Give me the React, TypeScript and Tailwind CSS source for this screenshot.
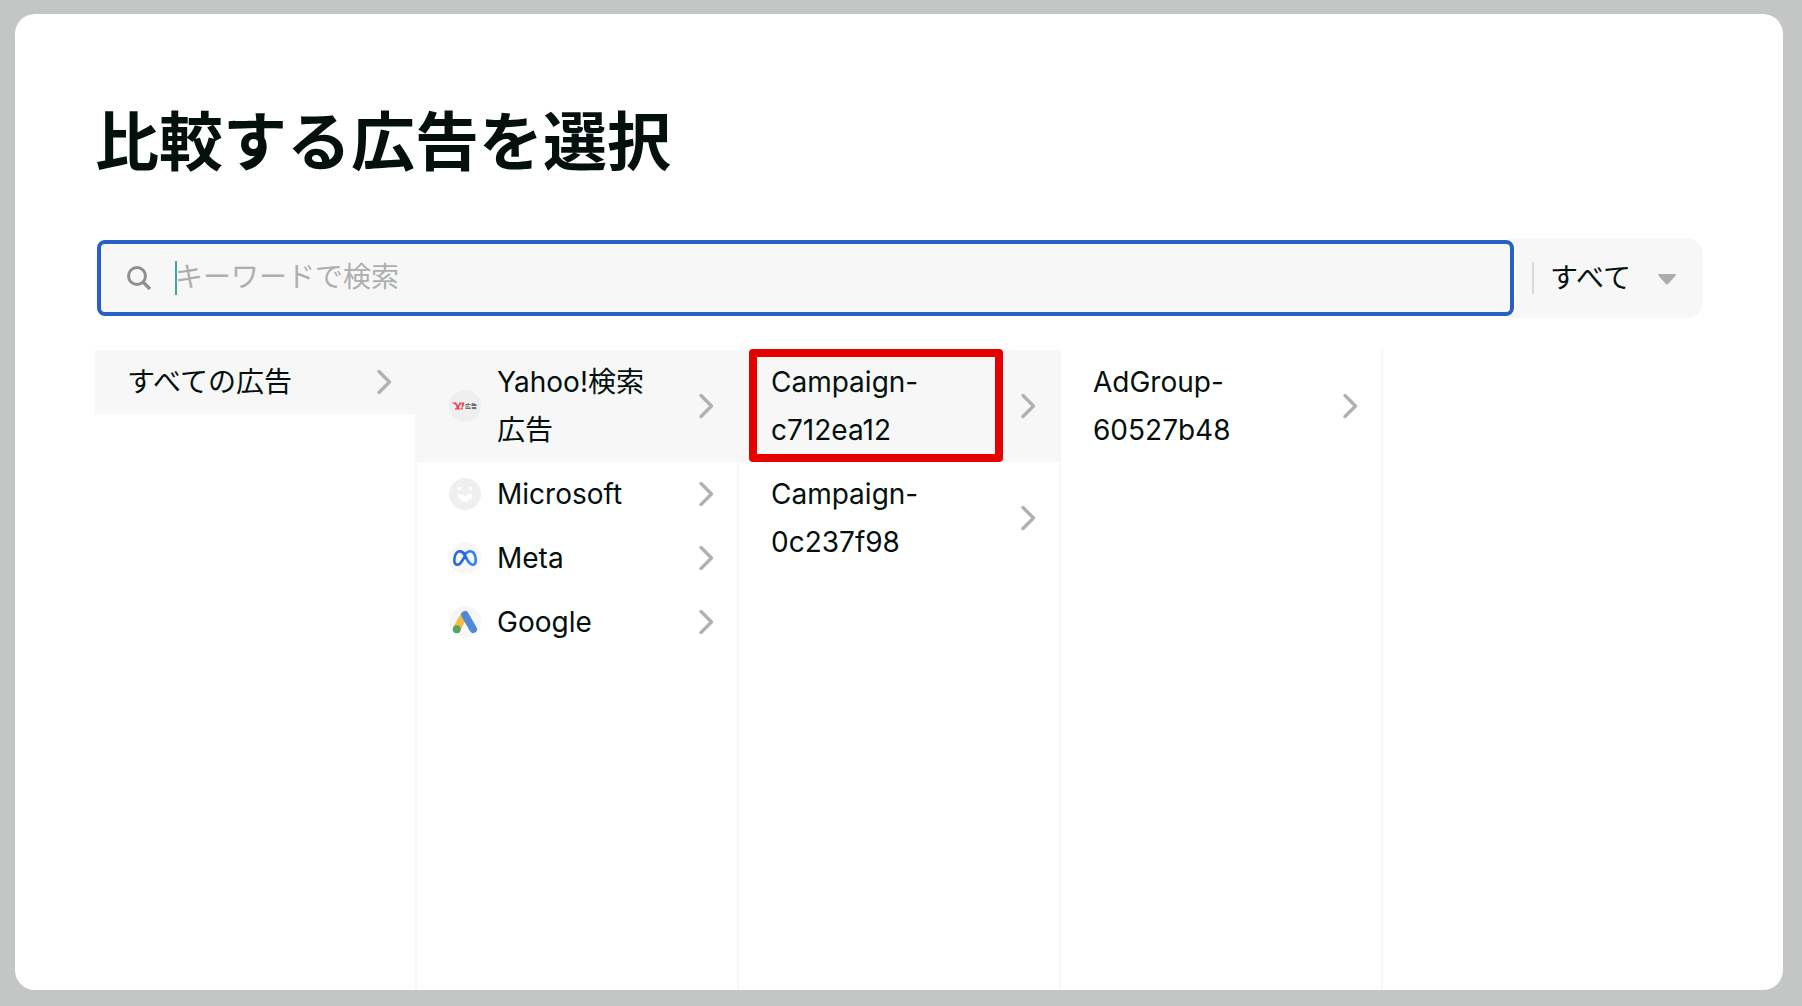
import React from "react";

type Item = {
  label: string;
  icon?: React.ReactNode;
  selected?: boolean;
  highlighted?: boolean;
};

function YahooIcon() {
  return (
    <span className="size-8 shrink-0 rounded-full bg-[#efefef] flex items-center justify-center whitespace-nowrap">
      <svg width="26" height="10" viewBox="0 0 26 10" aria-hidden="true">
        <path d="M0.3 1.6H4.6V2.5L5.8 4.2L7.6 2.5H7V1.6H9.8V2.5L7.1 5.1V7.2H8.4V8.4H3V7.2H4.4V5.1L1.8 2.5H0.3Z" fill="#f0424c" />
        <path d="M10.2 1.6H12.5L11.1 6H9.5ZM9.2 6.6H10.9L10.4 8.4H8.7Z" fill="#f0424c" />
        <text x="13" y="7" fontSize="6" fontWeight="700" fill="#5c5c5c" fontFamily="Noto Sans CJK JP">広告</text>
      </svg>
    </span>
  );
}

function MicrosoftIcon() {
  return (
    <span className="size-8 shrink-0 rounded-full bg-[#efefef]">
      <svg width="32" height="32" viewBox="0 0 32 32" fill="#fff" aria-hidden="true">
        <circle cx="10.5" cy="10.5" r="1.8" />
        <circle cx="21.5" cy="10.5" r="1.8" />
        <path d="M9 17.2Q9 16 10.4 16Q14 16 16.3 18.2Q18 16 21.5 16Q23.2 16 23.2 17.4Q23.2 19.6 20.9 22.2L17.6 18.9L17.1 19.4L20.1 22.8Q18.3 24 16 23.8Q9.6 23.3 9 17.2Z" />
      </svg>
    </span>
  );
}

function MetaIcon() {
  return (
    <span className="size-8 shrink-0 rounded-full bg-[#f7f7f7]">
      <svg width="32" height="32" viewBox="0 0 32 32" fill="none" strokeWidth="2.6" strokeLinecap="round" aria-hidden="true">
        <path d="M16 12.4C17.8 9.9 19.5 9.2 21.2 9.2C24.6 9.2 26.8 13.4 26.8 18C26.8 21 25.6 22.7 23.5 22.7C21 22.7 19.8 20.6 16.4 14.9" stroke="#2f80f2" />
        <path d="M16 12.4C14.2 9.9 12.5 9.2 10.8 9.2C7.5 9.2 5.3 13.6 5.3 18.2C5.3 21 6.5 22.7 8.5 22.7C11 22.7 12.3 20.6 15.6 14.9L16 14.1" stroke="#2b66df" />
        <path d="M11 9.2C13.2 9.2 14.8 11.5 17.2 15.7" stroke="#2b66df" />
      </svg>
    </span>
  );
}

function GoogleAdsIcon() {
  return (
    <span className="size-8 shrink-0 rounded-full bg-[#f7f7f7]">
      <svg width="32" height="32" viewBox="0 0 32 32" fill="none" strokeWidth="7.6" aria-hidden="true">
        <path d="M15.4 9L7.8 22.6" stroke="#f2bd42" />
        <path d="M16 8.8L24.2 23.2" stroke="#5189d6" strokeLinecap="round" />
        <circle cx="7.8" cy="23.2" r="4" fill="#58a65c" />
      </svg>
    </span>
  );
}

function ChevronIcon() {
  return (
    <svg className="shrink-0" width="32" height="32" viewBox="0 0 32 32" fill="none" stroke="#b0b2b1" strokeWidth="3.4" strokeLinecap="round" strokeLinejoin="round" aria-hidden="true">
      <path d="M12 5.5L22.5 16L12 26.5" />
    </svg>
  );
}

const columns: Item[][] = [
  [{ label: "すべての広告", selected: true }],
  [
    { label: "Yahoo!検索広告", icon: <YahooIcon />, selected: true },
    { label: "Microsoft", icon: <MicrosoftIcon /> },
    { label: "Meta", icon: <MetaIcon /> },
    { label: "Google", icon: <GoogleAdsIcon /> },
  ],
  [
    { label: "Campaign-c712ea12", selected: true, highlighted: true },
    { label: "Campaign-0c237f98" },
  ],
  [{ label: "AdGroup-60527b48" }],
  [],
];

function Row({ item }: { item: Item }) {
  return (
    <button
      type="button"
      className={`relative w-full flex items-center gap-4 py-2 pl-8 pr-4 text-left cursor-pointer ${
        item.selected ? "bg-[#f7f7f7]" : ""
      }`}
    >
      {item.icon}
      <span className="flex-1 min-w-0 pr-2">{item.label}</span>
      <ChevronIcon />
      {item.highlighted && (
        <span className="absolute -top-px bottom-0 left-[10px] right-14 border-8 border-[#e60000] rounded-sm" />
      )}
    </button>
  );
}

function SearchBar() {
  return (
    <div className="flex items-center h-20 rounded-2xl bg-[#f7f7f7]">
      <div className="flex-1 self-stretch rounded-[10px] bg-white p-[2px]">
        <label className="flex items-center h-full rounded-lg border-4 border-[#2860c8] bg-[#f7f7f7] pl-6">
          <svg className="shrink-0" width="28" height="28" viewBox="0 0 28 28" fill="none" stroke="#8c918f" aria-hidden="true">
            <circle cx="12" cy="12" r="8.5" strokeWidth="3" />
            <path d="M18 18L25 25" strokeWidth="3.4" />
          </svg>
          <span className="w-[2px] h-[34px] ml-[22px] -mr-[2px] bg-[#45a3a0] shrink-0" />
          <input
            type="text"
            aria-label="キーワードで検索"
            placeholder="キーワードで検索"
            className="flex-1 min-w-0 h-12 pb-[2px] bg-transparent outline-none caret-[#45a3a0] placeholder:text-[#acafae]"
          />
        </label>
      </div>
      <span className="w-[2px] h-8 ml-4 bg-[#d9dada]" />
      <div className="relative">
        <select
          aria-label="検索対象"
          className="appearance-none w-[169px] h-12 pl-4 pb-[2px] bg-transparent outline-none cursor-pointer"
        >
          <option>すべて</option>
        </select>
        <svg className="absolute right-[26px] top-[19px] pointer-events-none" width="20" height="12" viewBox="0 0 20 12" aria-hidden="true">
          <path d="M2.2 1H17.8Q19.6 1 18.5 2.8L11.6 10.6Q10 12.4 8.4 10.6L1.5 2.8Q0.4 1 2.2 1Z" fill="#abaead" />
        </svg>
      </div>
    </div>
  );
}

export default function App() {
  return (
    <div className="min-h-screen flex bg-[#c4c6c5] pt-[14px] pr-[19px] pb-4 pl-[15px] font-['Inter','Noto_Sans_CJK_JP',sans-serif] text-[28px] leading-12 text-[#04100d]">
      <main className="flex-1 flex flex-col rounded-[20px] bg-white px-20 pt-20">
        <h1 className="text-[64px] leading-24 font-bold mb-12">比較する広告を選択</h1>
        <SearchBar />

        {/* Drill-down columns */}
        <div className="flex flex-1 mt-8">
          {columns.map((items, i) => (
            <div key={i} className={`flex-1 min-w-0 ${i > 0 ? "border-l-2 border-[#f7f7f7]" : ""}`}>
              {items.map((item) => (
                <Row key={item.label} item={item} />
              ))}
            </div>
          ))}
        </div>
      </main>
    </div>
  );
}
